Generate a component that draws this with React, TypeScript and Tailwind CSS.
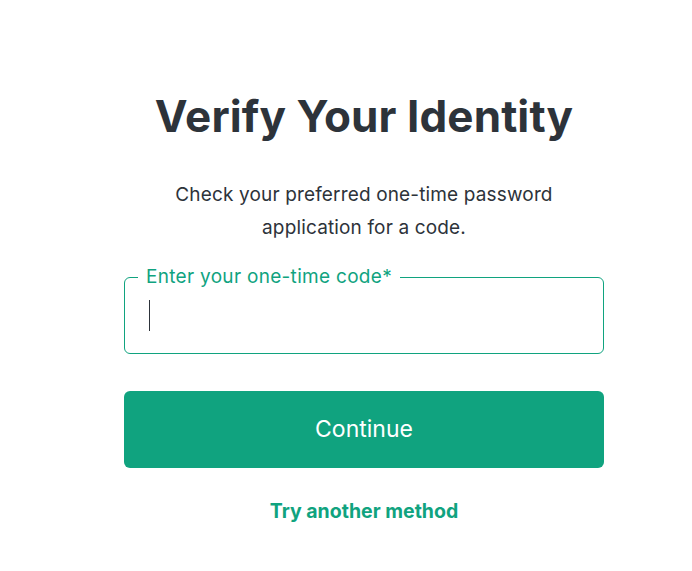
export default function App() {
    return (
        <main className="min-h-[571px] bg-white font-['Inter','Noto_Sans',sans-serif] text-[#2d333a]">
            <div className="ml-[124px] flex w-[480px] flex-col items-center pt-[89px]">
                <h1 className="text-[44px] leading-[54px] font-bold tracking-[0.1px]">
                    Verify Your Identity
                </h1>

                <p className="mt-[35px] w-[420px] text-center text-[19px] leading-[33px] tracking-[0.15px]">
                    Check your preferred one-time password application for a code.
                </p>

                <fieldset className="mt-[22px] w-full rounded-[6px] border border-[#10a37f] pr-4 pb-[10px] pl-[24px]">
                    <legend className="-ml-[11px] px-[8px] text-[19px] leading-[22px] tracking-[0.3px] text-[#10a37f]">
                        Enter your one-time code*
                    </legend>
                    <div className="flex h-[55px] items-center">
                        <span className="h-[31px] w-px bg-[#2d333a]" />
                        <input
                            className="flex-1 bg-transparent text-[18px] caret-transparent outline-none"
                            aria-label="One-time code"
                        />
                    </div>
                </fieldset>

                <button className="mt-[37px] h-[77px] w-full rounded-[6px] bg-[#10a37f] text-[23px] text-white">
                    Continue
                </button>

                <a className="mt-[29px] text-[19.5px] font-bold text-[#10a37f]" href="#">
                    Try another method
                </a>
            </div>
        </main>
    )
}
